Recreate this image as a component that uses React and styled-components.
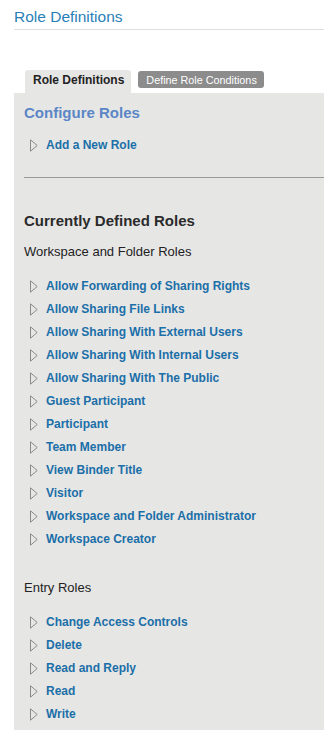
import styled, { createGlobalStyle } from "styled-components";

const GlobalStyle = createGlobalStyle`
  html, body {
    margin: 0;
    padding: 0;
    background: #fff;
    font-family: "Liberation Sans", Arial, sans-serif;
  }
`;

const Page = styled.div`
  padding: 8px 0 0 14px;
  width: 310px;
`;

const PageTitle = styled.h1`
  margin: 0;
  padding-bottom: 3px;
  font-size: 15.5px;
  font-weight: 400;
  line-height: 18px;
  color: #2a7fb8;
  border-bottom: 1px solid #dedede;
`;

const Tabs = styled.div`
  display: flex;
  align-items: flex-start;
  gap: 7px;
  margin: 40px 0 0 11px;
`;

const Tab = styled.div`
  line-height: 14px;
  ${({ $active }) =>
    $active
      ? `
    background: #e6e6e5;
    color: #222;
    font-size: 12px;
    font-weight: 700;
    padding: 3px 7px 6px 8px;
    border-radius: 3px 3px 0 0;
  `
      : `
    background: #8c8c8c;
    color: #fff;
    font-size: 10.8px;
    font-weight: 400;
    padding: 2px 7px 1px 8px;
    margin-top: 1px;
    border-radius: 3px;
  `}
`;

const Panel = styled.div`
  background: #e6e6e5;
  padding: 11px 0 14px 10px;
  min-height: 620px;
`;

const SectionTitle = styled.h2`
  margin: 0;
  font-size: 15px;
  font-weight: 700;
  line-height: 18px;
  color: ${({ $accent }) => ($accent ? "#5b86c6" : "#2b2b2b")};
`;

const SubTitle = styled.h3`
  margin: 0;
  font-size: 13px;
  font-weight: 400;
  line-height: 15px;
  color: #222;
`;

const List = styled.ul`
  list-style: none;
  margin: 0;
  padding: 0 0 0 6px;
  display: flex;
  flex-direction: column;
  gap: 9px;
`;

const Item = styled.li`
  display: flex;
  align-items: center;
  gap: 8px;
  height: 14px;
  font-size: 12px;
  font-weight: 700;
  color: #1b6fa8;
`;

const Rule = styled.hr`
  margin: 0;
  border: 0;
  border-top: 1px solid #9a9a9a;
`;

const Arrow = () => (
  <svg width="8" height="13" viewBox="0 0 8 13">
    <path d="M0.5 0.8 L7.2 6.5 L0.5 12.2 Z" fill="none" stroke="#8a8a8a" strokeWidth="1" />
  </svg>
);

const Spacer = styled.div`
  height: ${({ $h }) => $h}px;
`;

const workspaceRoles = [
  "Allow Forwarding of Sharing Rights",
  "Allow Sharing File Links",
  "Allow Sharing With External Users",
  "Allow Sharing With Internal Users",
  "Allow Sharing With The Public",
  "Guest Participant",
  "Participant",
  "Team Member",
  "View Binder Title",
  "Visitor",
  "Workspace and Folder Administrator",
  "Workspace Creator",
];

const entryRoles = ["Change Access Controls", "Delete", "Read and Reply", "Read", "Write"];

const RoleList = ({ items }) => (
  <List>
    {items.map((name) => (
      <Item key={name}>
        <Arrow />
        {name}
      </Item>
    ))}
  </List>
);

export default function App() {
  return (
    <>
      <GlobalStyle />
      <Page>
        <PageTitle>Role Definitions</PageTitle>
        <Tabs>
          <Tab $active>Role Definitions</Tab>
          <Tab>Define Role Conditions</Tab>
        </Tabs>
        <Panel>
          <SectionTitle $accent>Configure Roles</SectionTitle>
          <Spacer $h={16} />
          <RoleList items={["Add a New Role"]} />
          <Spacer $h={25} />
          <Rule />
          <Spacer $h={34} />
          <SectionTitle>Currently Defined Roles</SectionTitle>
          <Spacer $h={14} />
          <SubTitle>Workspace and Folder Roles</SubTitle>
          <Spacer $h={20} />
          <RoleList items={workspaceRoles} />
          <Spacer $h={34} />
          <SubTitle>Entry Roles</SubTitle>
          <Spacer $h={20} />
          <RoleList items={entryRoles} />
        </Panel>
      </Page>
    </>
  );
}
